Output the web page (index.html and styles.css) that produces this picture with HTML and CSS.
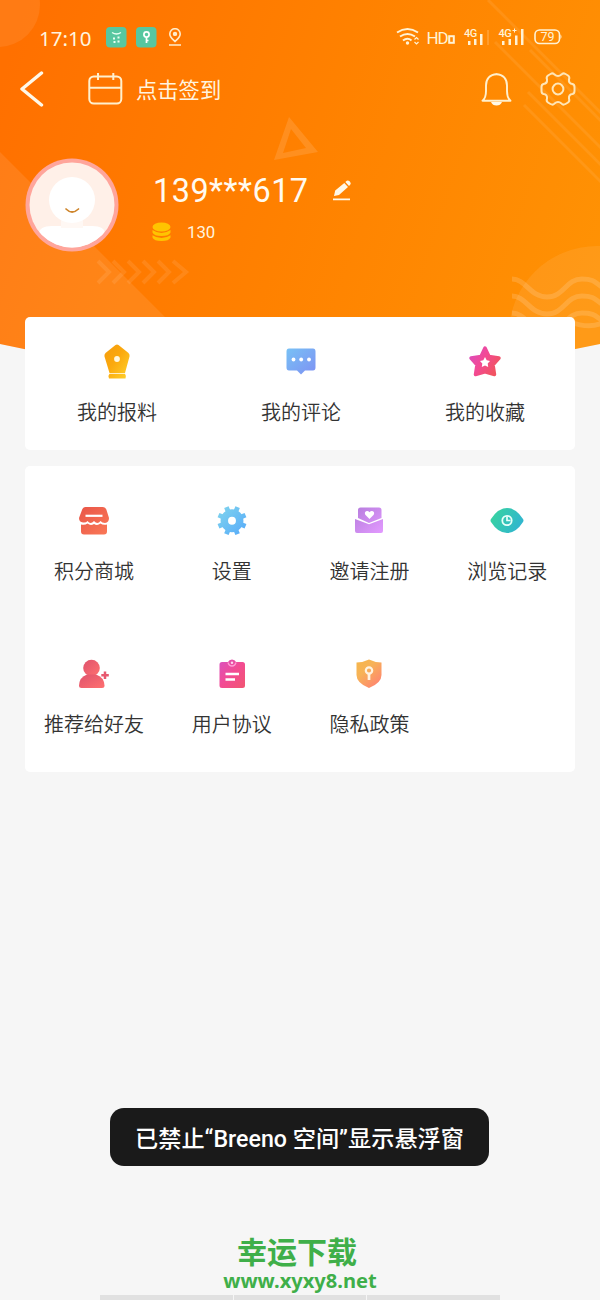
FILE: index.html
```html
<!DOCTYPE html>
<html lang="zh-CN">
<head>
<meta charset="utf-8">
<title>个人中心</title>
<link rel="stylesheet" href="styles.css">
</head>
<body>
<div class="screen">
  <svg class="backdrop" viewBox="0 0 600 396" width="600" height="396" aria-hidden="true">
    <defs>
      <linearGradient id="sky" gradientUnits="userSpaceOnUse" x1="0" y1="80" x2="600" y2="280">
        <stop offset="0" stop-color="#ff7000"/><stop offset=".5" stop-color="#ff8100"/><stop offset="1" stop-color="#ff9204"/>
      </linearGradient>
      <clipPath id="dome"><path d="M0 0H600V344Q300 410 0 344Z"/></clipPath>
    </defs>
    <g clip-path="url(#dome)">
      <path d="M0 0H600V396H0Z" fill="url(#sky)"/>
      <g fill="#fff">
        <circle cx="-2" cy="5" r="42" opacity=".08"/>
        <path d="M0 152L210 362V396H0Z" opacity=".09"/>
        <circle cx="597" cy="334" r="88" opacity=".08"/>
        <path d="M289 117L318 152L274 160ZM291 129L283 153L306 148Z" fill-rule="evenodd" opacity=".12"/>
      </g>
      <g fill="none" stroke="#fff">
        <path d="M98 261L109 272L98 283M113 261L124 272L113 283M128 261L139 272L128 283M143 261L154 272L143 283M158 261L169 272L158 283M173 261L186 272L173 283" stroke-width="4" opacity=".09"/>
        <path d="M488 0L610 122M495 42L610 157M530 50L610 130M528 92L610 174M524 105L610 191" stroke-width="3" opacity=".08"/>
        <path d="M512 279C526 279 530 297 547 297S566 279 582 279S595 285 606 289M512 296C526 296 530 314 547 314S566 296 582 296S595 302 606 306M512 313C526 313 530 331 547 331S566 313 582 313S595 318 606 322M570 322Q592 330 606 321" stroke-width="5" opacity=".15"/>
      </g>
    </g>
  </svg>

  <header class="top">
    <div class="status">
      <div class="status-left">
        <span class="clock">17:10</span>
        <svg width="21" height="21" viewBox="0 0 21 21"><rect width="20.5" height="20.5" rx="4" fill="#57c7a0"/><path d="M6 5.500Q10.500 8.500 15 5.500" fill="none" stroke="#e9fff2" stroke-width="1.300"/><path d="M7 10.500h2v2H7zM11.500 9.500h2v2h-2zM7.500 14h2v2h-2zM11.500 13.500h2v2h-2z" fill="#e9fff2"/></svg>
        <svg width="21" height="21" viewBox="0 0 21 21"><rect width="20.500" height="20.500" rx="4" fill="#57c7a0"/><g fill="none" stroke="#fff" stroke-width="1.700"><circle cx="10.500" cy="7.500" r="2.600"/><path d="M10.500 10V16M10.500 13.500H12.500"/></g></svg>
        <svg width="14" height="18" viewBox="0 0 14 18" fill="none" stroke="#ffeccb" stroke-width="1.600"><path d="M7 13.500C4 10.500 1.800 9 1.800 5.900a5.200 5.200 0 0 1 10.400 0C12.200 9 10 10.500 7 13.500ZM1 17H13"/><circle cx="7" cy="5.900" r="1.400" fill="#ffeccb"/></svg>
      </div>
      <svg class="signals" width="168" height="22" viewBox="396 26 168 22">
        <g fill="none" stroke="#fff2d5" stroke-width="2">
          <path d="M397 32.500Q407.500 25.500 418 32.500M400 36.500Q407.500 31.500 415 36.500M403 40.500Q407.500 37 411.500 40.500"/>
          <path d="M414.500 39.500l2-2 2 2M414.500 42l2 2 2-2" stroke-width="1.200"/>
          <rect x="449.200" y="36.200" width="4.600" height="6.600"/>
          <rect x="535" y="30" width="24.500" height="13.500" rx="4.500" stroke-width="1.600"/>
        </g>
        <g fill="#fff2d5">
          <circle cx="407.500" cy="43" r="1.700"/>
          <path d="M468 41h2.500v4H468zM474 39h2.500v6H474zM480 34h2.500v11H480zM502 41h2.500v4H502zM508.500 39h2.500v6h-2.500zM515 35.500h2.500V45H515zM521 29h2.500v16H521zM560.500 34.500q2 2.200 0 4.500z"/>
          <path d="M487 30h2v15h-2z" opacity=".2"/>
          <text class="net-hd" x="426.500" y="43.500">HD</text>
          <text class="net-4g" x="464" y="37">4G</text>
          <text class="net-4g" x="498.500" y="37">4G</text>
          <path d="M512.500 30.500h4M514.500 28.500v4" stroke="#fff2d5" stroke-width="1"/>
          <text class="battery" x="540.500" y="41.300">79</text>
        </g>
      </svg>
    </div>

    <nav class="nav">
      <svg class="back" width="24" height="36" viewBox="0 0 24 36"><path d="M21.500 2L2 18L21.500 34" fill="none" stroke="#fff8e8" stroke-width="3.400" stroke-linecap="round" stroke-linejoin="round"/></svg>
      <a class="signin">
        <svg width="35" height="34" viewBox="0 0 35 34" fill="none" stroke="#fff0ce" stroke-width="2"><rect x="1.300" y="4.500" width="32" height="27" rx="4.500"/><path d="M1.300 15.700H33.300M10 1V8M25.300 1V8"/></svg>
        <span>点击签到</span>
      </a>
      <div class="nav-actions">
        <svg width="32" height="35" viewBox="0 0 32 35"><path d="M2.500 28.700H30.500Q27 26 27 19V13.500C27 7 23 2.200 16.500 2.200S6 7 6 13.500V19Q6 26 2.500 28.700Z" fill="none" stroke="#fff0ce" stroke-width="1.900" stroke-linejoin="round"/><path d="M15 1.500q1.500-1.200 3 0M11 30H22Q20.500 33.500 16.500 33.500T11 30Z" fill="#fff8e8"/></svg>
        <svg width="36" height="36" viewBox="0 0 36 36" fill="none" stroke="#ffe6b8" stroke-width="2"><circle cx="18" cy="18" r="5.400"/><path d="M10.500 3Q13 1.500 14.500 3.500Q18 6.500 21.500 3.500Q23 1.500 25.500 3L28 4.500Q30 6 29 8.500Q28.500 12.500 32.500 13Q34.500 13.500 34.500 16V20Q34.500 22.500 32.500 23Q28.500 23.500 29 27.500Q30 30 28 31.500L25.500 33Q23 34.500 21.500 32.500Q18 29.500 14.500 32.500Q13 34.500 10.500 33L8 31.500Q6 30 7 27.500Q7.500 23.500 3.500 23Q1.500 22.500 1.500 20V16Q1.500 13.500 3.500 13Q7.500 12.500 7 8.500Q6 6 8 4.500Z"/></svg>
      </div>
    </nav>

    <section class="profile">
      <svg class="avatar" width="94" height="94" viewBox="0 0 94 94">
        <defs><clipPath id="face"><circle cx="47" cy="47" r="42.500"/></clipPath></defs>
        <circle cx="47" cy="47" r="46.500" fill="#ffa59b"/>
        <g clip-path="url(#face)"><path d="M0 0H94V94H0Z" fill="#fff0e8"/><path d="M14 94V76Q14 68 27 68H67Q80 68 80 76V94Z" fill="#fff"/><path d="M36 60H58V70H36Z" fill="#fff8f4"/><circle cx="47" cy="42" r="23" fill="#fff"/></g>
        <path d="M41 51Q47 57 53.500 51" fill="none" stroke="#ce852c" stroke-width="1.700" stroke-linecap="round"/>
      </svg>
      <div class="account">
        <div class="phone-row">
          <span class="phone">139***617</span>
          <svg width="20" height="21" viewBox="0 0 20 21" fill="#fff8e6"><path d="M2 16L3.200 10.500L12.300 3L16 6.900L7 15ZM13.300 2L14.800.8Q16 0 17.300 1.100L18.300 2.200Q19.300 3.500 18.200 4.700L17 6ZM1 18.600H18V20.200H1Z"/></svg>
        </div>
        <div class="coin-row">
          <svg width="19" height="20" viewBox="0 0 19 20" fill="#ffc400"><ellipse cx="9.500" cy="5" rx="9" ry="4.600"/><path d="M.5 8Q9.500 14 18.500 8V10.500Q17 14 9.500 14T.5 10.500ZM.5 13.200Q9.500 19 18.500 13.200V15.500Q17 19 9.500 19T.5 15.500Z"/></svg>
          <span>130</span>
        </div>
      </div>
    </section>
  </header>

  <main class="cards">
    <section class="card card-three">
      <a class="item">
        <svg width="36" height="36" viewBox="0 0 36 36"><defs><linearGradient id="gold" x2="1" y2="1"><stop stop-color="#f59c0e"/><stop offset=".45" stop-color="#fba90d"/><stop offset="1" stop-color="#ffd32e"/></linearGradient></defs><path d="M16.500 1Q18 0 19.500 1L29.500 9Q31 10.500 30.500 12.500L26 29H10.500L5.500 12.500Q5 10.500 6.500 9ZM10.500 29.800H26Q27.500 32 26.500 34.500H10Q8.500 32 10.500 29.800Z" fill="url(#gold)"/><circle cx="18" cy="15" r="2.900" fill="#fff8df"/></svg>
        <span>我的报料</span>
      </a>
      <a class="item">
        <svg width="36" height="36" viewBox="0 0 36 36"><defs><linearGradient id="blue" x2="1" y2="1"><stop stop-color="#78c1f5"/><stop offset="1" stop-color="#7e91f3"/></linearGradient></defs><path d="M6 4.500H30Q32.500 4.500 32.500 7.500V23.500Q32.500 26.500 30 26.500H22L18 30.500L14 26.500H6Q3.500 26.500 3.500 23.500V7.500Q3.500 4.500 6 4.500Z" fill="url(#blue)"/><g fill="#fff"><circle cx="10.500" cy="15.500" r="1.900"/><circle cx="18.200" cy="15.500" r="1.900"/><circle cx="26" cy="15.500" r="1.900"/></g></svg>
        <span>我的评论</span>
      </a>
      <a class="item">
        <svg width="36" height="36" viewBox="0 0 36 36"><defs><linearGradient id="pink" x2="1" y2=".6"><stop stop-color="#d84cc1"/><stop offset=".5" stop-color="#f34995"/><stop offset="1" stop-color="#f15362"/></linearGradient></defs><path d="M18 4L22 12.500L32 14L26 20.800L27.500 30.500L18 27.800L8.500 30.500L10 20.800L4 14L14 12.500Z" fill="url(#pink)" stroke="url(#pink)" stroke-width="3.500" stroke-linejoin="round"/><path d="M18 13L19.700 16.300L23 16.900L20.700 19.500L21.200 23L18 21.500L14.800 23L15.300 19.500L13 16.900L16.300 16.300Z" fill="#fff"/></svg>
        <span>我的收藏</span>
      </a>
    </section>

    <section class="card card-four">
      <a class="item">
        <svg width="36" height="36" viewBox="0 0 36 36"><defs><linearGradient id="red" x2="1" y2="1"><stop stop-color="#e95548"/><stop offset="1" stop-color="#fa7957"/></linearGradient></defs><path d="M9.500 4H26.500Q29.500 4 30.500 7L33 15Q33 19.500 29 20Q26 20 24.500 18Q21.500 22 18 18Q14.500 22 11.500 18Q10 20 7 19.500Q3 19 3 15L6 7Q7 4 9.500 4ZM5 21.500Q9 22.500 11.500 20.500Q14.500 23 18 21Q21.500 23 24.500 20.500Q27 22.500 31 21.500V28.500Q31 31.500 28 31.500H8Q5 31.500 5 28.500Z" fill="url(#red)"/><path d="M9.500 12.800H26.500" stroke="#fff" stroke-width="2.200"/></svg>
        <span>积分商城</span>
      </a>
      <a class="item">
        <svg width="36" height="36" viewBox="0 0 36 36"><defs><linearGradient id="cyan" gradientUnits="userSpaceOnUse" x1="4" y1="4" x2="32" y2="32"><stop stop-color="#81d5ed"/><stop offset="1" stop-color="#56aafa"/></linearGradient></defs><circle cx="18" cy="17.700" r="7.700" fill="none" stroke="url(#cyan)" stroke-width="7.500"/><path d="M21.200 10L23.600 4.200M25.700 14.500L31.500 12.100M25.700 20.900L31.500 23.300M21.200 25.400L23.600 31.200M14.800 25.400L12.400 31.200M10.300 20.900L4.500 23.300M10.300 14.500L4.500 12.100M14.800 10L12.400 4.200" fill="none" stroke="url(#cyan)" stroke-width="4.800"/></svg>
        <span>设置</span>
      </a>
      <a class="item">
        <svg width="36" height="36" viewBox="0 0 36 36"><defs><linearGradient id="violet" x2="1" y2="1"><stop stop-color="#b67ddd"/><stop offset="1" stop-color="#e39aff"/></linearGradient></defs><path d="M9.500 4.500H28Q30.500 4.500 30.500 7V15L18 20L7 15V7Q7 4.500 9.500 4.500ZM4 16L18 21.300L32 16V28Q32 30 30 30H6Q4 30 4 28Z" fill="url(#violet)"/><path d="M18.500 16L14.500 12Q13 9.500 15 8.200Q17 7.200 18.500 9.300Q20 7.200 22 8.200Q24 9.500 22.500 12Z" fill="#fff"/></svg>
        <span>邀请注册</span>
      </a>
      <a class="item">
        <svg width="36" height="36" viewBox="0 0 36 36"><defs><linearGradient id="teal" x2="1" y2=".4"><stop stop-color="#39d69b"/><stop offset="1" stop-color="#31b7cd"/></linearGradient></defs><path d="M2 16Q9 5 18 5T34 16Q35 17.500 34 19Q27 30 18 30T2 19Q1 17.500 2 16Z" fill="url(#teal)"/><circle cx="18" cy="17.500" r="4.700" fill="none" stroke="#e9fff9" stroke-width="1.800"/><path d="M18 13.500V17.500H21.500" fill="none" stroke="#e9fff9" stroke-width="1.700"/></svg>
        <span>浏览记录</span>
      </a>
      <a class="item">
        <svg width="36" height="36" viewBox="0 0 36 36"><defs><linearGradient id="rose" x2="1" y2="1"><stop stop-color="#df536d"/><stop offset="1" stop-color="#ff7070"/></linearGradient></defs><g fill="url(#rose)"><circle cx="15.500" cy="12" r="8.300"/><path d="M11 18.500H20Q28 21 28.500 29.500Q28.500 32 26 32H5.500Q3 32 3 29.500Q3.500 21 11 18.500Z"/></g><path d="M29 15.500V23M25.300 19.200H32.800" stroke="#e7586e" stroke-width="2.500"/></svg>
        <span>推荐给好友</span>
      </a>
      <a class="item">
        <svg width="36" height="36" viewBox="0 0 36 36"><defs><linearGradient id="magenta" x2="1" y2="1"><stop stop-color="#d952c0"/><stop offset=".5" stop-color="#f34b93"/><stop offset="1" stop-color="#f15570"/></linearGradient></defs><path d="M8 6H14Q15 3.500 18 3.500T22 6H28.500Q31 6 31 8.500V29.500Q31 32 28.500 32H8Q5.500 32 5.500 29.500V8.500Q5.500 6 8 6Z" fill="url(#magenta)"/><path d="M14 6.500Q15 10 18 10T22 6.500" fill="none" stroke="#ff9bd4" stroke-width="1.300"/><circle cx="18" cy="6.800" r="1.200" fill="#ffd4ee"/><path d="M11.500 18H25M11.500 23.500H21" stroke="#fff" stroke-width="2.400"/></svg>
        <span>用户协议</span>
      </a>
      <a class="item">
        <svg width="36" height="36" viewBox="0 0 36 36"><defs><linearGradient id="amber" x2=".8" y2="1"><stop stop-color="#f5b64a"/><stop offset=".4" stop-color="#f7b357"/><stop offset="1" stop-color="#ff8372"/></linearGradient></defs><path d="M18 3.500Q24 6.500 30.500 6.500V19Q30.500 27 18 32Q5.500 27 5.500 19V6.500Q12 6.500 18 3.500Z" fill="url(#amber)"/><circle cx="18" cy="14.500" r="3.200" fill="none" stroke="#fff3e1" stroke-width="2.200"/><path d="M18 17.500V24" stroke="#fff3e1" stroke-width="2.700"/></svg>
        <span>隐私政策</span>
      </a>
    </section>
  </main>

  <div class="toast">已禁止“Breeno 空间”显示悬浮窗</div>

  <footer class="brand">
    <div class="brand-name">幸运下载</div>
    <div class="brand-url">www.xyxy8.net</div>
  </footer>
  <div class="home-bar"><i></i><i></i><i></i></div>
</div>
</body>
</html>
```

FILE: styles.css
```css
* { box-sizing: border-box; }

body {
  margin: 0;
  font-family: Roboto, "Noto Sans CJK SC", sans-serif;
}

svg { display: block; flex: none; }

.screen {
  position: relative;
  display: flex;
  flex-direction: column;
  width: 600px;
  height: 1300px;
  overflow: hidden;
  background: #f6f6f6;
}

.backdrop { position: absolute; top: 0; left: 0; }

.top {
  position: relative;
  height: 317px;
  padding-top: 26px;
  color: #fff4df;
}

.status {
  display: flex;
  align-items: center;
  justify-content: space-between;
  height: 22px;
  padding: 0 36px 0 39px;
}

.status-left { display: flex; align-items: center; gap: 9px; }
.status-left svg:last-child { margin-left: 2px; }

.clock {
  width: 58px;
  padding-top: 1px;
  font: 400 20.5px/22px "Noto Sans", sans-serif;
}

.signals { overflow: visible; }
.net-hd { font: 400 17px Roboto, sans-serif; letter-spacing: -1.2px; }
.net-4g { font: 500 11px Roboto, sans-serif; letter-spacing: -.6px; }
.battery { font: 400 12.5px Roboto, sans-serif; }

.nav {
  display: flex;
  align-items: center;
  height: 40px;
  margin-top: 21px;
  padding: 0 24px 0 20px;
}

.signin {
  display: flex;
  align-items: center;
  gap: 13px;
  margin-left: 44px;
  font-size: 21.3px;
  line-height: 36px;
}

.signin span { padding-top: 4px; }

.nav-actions {
  display: flex;
  align-items: center;
  gap: 28px;
  margin-left: auto;
}

.profile {
  display: flex;
  gap: 34px;
  margin-top: 49px;
  padding-left: 25px;
}

.account { padding-top: 15px; }

.phone-row { display: flex; align-items: center; gap: 23px; height: 36px; }
.phone { font-size: 32.4px; line-height: 36px; letter-spacing: .5px; color: #fffaf0; }
.phone-row svg { margin-bottom: 2px; }

.coin-row {
  display: flex;
  align-items: center;
  gap: 16px;
  height: 20px;
  margin-top: 13px;
  margin-left: -1px;
  font-size: 16.8px;
}

.cards {
  position: relative;
  display: flex;
  flex-direction: column;
  gap: 16px;
  padding: 0 25px;
}

.card { display: grid; border-radius: 5px; background: #fff; }

.card-three {
  grid-template-columns: repeat(3, 184px);
  height: 133px;
  padding-top: 27px;
}

.card-four {
  grid-template-columns: repeat(4, 137.8px);
  grid-auto-rows: 153px;
  height: 306px;
  padding-top: 37px;
}

.item {
  display: flex;
  flex-direction: column;
  align-items: center;
  gap: 18px;
  color: #333;
  font-size: 20px;
  font-weight: 350;
  line-height: 30px;
  white-space: nowrap;
}

.toast {
  align-self: center;
  width: 379px;
  height: 58px;
  margin-top: 336px;
  margin-right: 1px;
  border-radius: 14px;
  background: #1a1a1a;
  color: #fff;
  font-size: 23.2px;
  font-weight: 500;
  line-height: 63px;
  text-align: center;
  white-space: nowrap;
}

.brand {
  margin-top: 68px;
  color: #3faf49;
  font-weight: 700;
  text-align: center;
}

.brand-name { font-size: 30px; line-height: 36px; padding: 1px 6px 0 0; }
.brand-url { margin-top: -2px; font: 700 20.100px/24px "Noto Sans", sans-serif; }

.home-bar {
  display: flex;
  gap: 1px;
  width: 400px;
  height: 5px;
  margin: auto auto 0;
}

.home-bar i { flex: 1; background: #e1e1e1; }
```
